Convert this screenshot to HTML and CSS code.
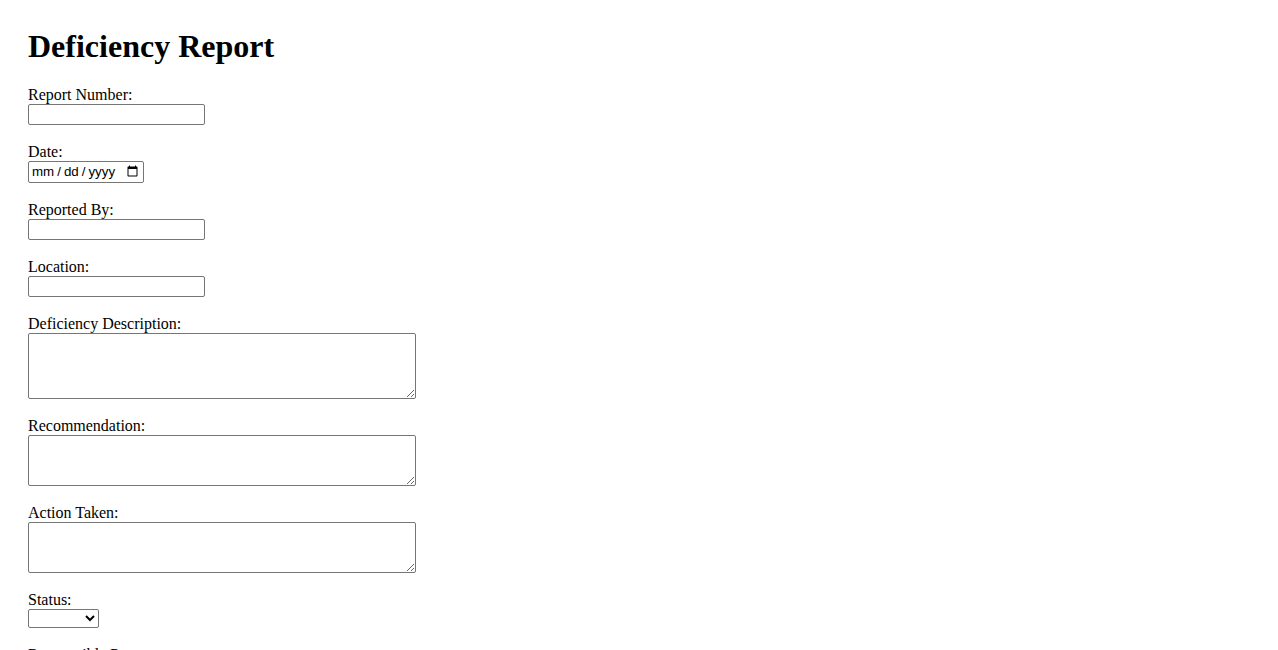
FILE: index.html
```html
<!DOCTYPE html>
<html lang="en">
<head>
<meta charset="utf-8">
<title>Deficiency Report</title>
<link rel="stylesheet" href="styles.css">
</head>
<body class="page">
<div class="container">
<h1 class="title">Deficiency Report</h1>
<form class="report-form">
<label class="field-label" for="reportNumber">Report Number:</label><br>
<input class="text-input" type="text" id="reportNumber" name="reportNumber"><br><br>
<label class="field-label" for="date">Date:</label><br>
<input class="date-input" type="date" id="date" name="date"><br><br>
<label class="field-label" for="reportedBy">Reported By:</label><br>
<input class="text-input" type="text" id="reportedBy" name="reportedBy"><br><br>
<label class="field-label" for="location">Location:</label><br>
<input class="text-input" type="text" id="location" name="location"><br><br>
<label class="field-label" for="description">Deficiency Description:</label><br>
<textarea class="area-input" id="description" name="description" rows="4"></textarea><br><br>
<label class="field-label" for="recommendation">Recommendation:</label><br>
<textarea class="area-input" id="recommendation" name="recommendation" rows="3"></textarea><br><br>
<label class="field-label" for="actionTaken">Action Taken:</label><br>
<textarea class="area-input" id="actionTaken" name="actionTaken" rows="3"></textarea><br><br>
<label class="field-label" for="status">Status:</label><br>
<select class="select-input" id="status" name="status">
<option value=""></option>
<option value="open">Open</option>
<option value="closed">Closed</option>
</select><br><br>
<label class="field-label" for="responsible">Responsible Person:</label><br>
<input class="text-input" type="text" id="responsible" name="responsible"><br><br>
</form>
</div>
</body>
</html>
```

FILE: styles.css
```css
html, body {
  background: #ffffff;
}
.page {
  margin: 8px;
  font-family: "Liberation Serif", "Times New Roman", serif;
  font-size: 16px;
  color: #000000;
}
.container {
  padding: 20px;
}
.title {
  margin: 0 0 21px 0;
  font-size: 32px;
  font-weight: bold;
}
.text-input {
  width: 177px;
  height: 21px;
  box-sizing: border-box;
  font-family: "Liberation Sans", Arial, sans-serif;
  font-size: 13.33px;
  border: 1px solid #767676;
  border-radius: 2px;
  padding: 1px 2px;
}
.date-input {
  width: 116px;
  height: 22px;
  box-sizing: border-box;
  font-family: "Liberation Sans", Arial, sans-serif;
  font-size: 13.33px;
  border: 1px solid #767676;
  border-radius: 2px;
  padding: 1px 2px;
}
.date-input::-webkit-datetime-edit-text {
  padding: 0 2px;
}
.area-input {
  width: 388px;
  box-sizing: border-box;
  font-family: "Liberation Mono", monospace;
  font-size: 13.33px;
  line-height: 15px;
  border: 1px solid #767676;
  border-radius: 2px;
  padding: 2px;
  vertical-align: top;
}
.select-input {
  width: 71px;
  height: 19px;
  box-sizing: border-box;
  font-family: "Liberation Sans", Arial, sans-serif;
  font-size: 13.33px;
  border: 1px solid #767676;
  border-radius: 2px;
  background: #ffffff;
}
```
